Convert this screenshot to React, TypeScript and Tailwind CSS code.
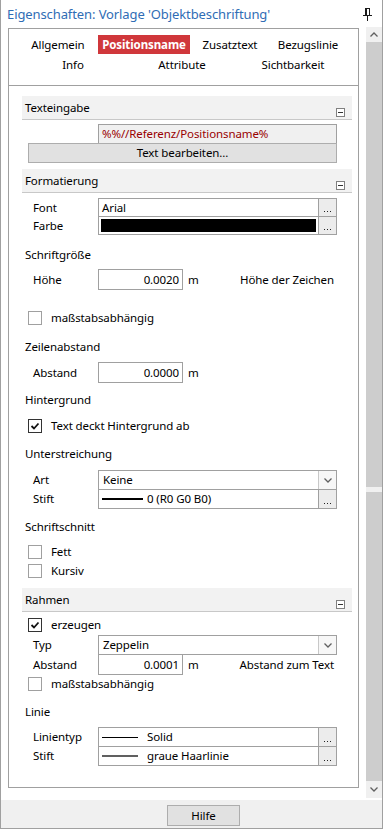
import React from "react";

function Chevron({ up }: { up?: boolean }) {
  return (
    <svg width="8" height="5" viewBox="0 0 8 5">
      <path
        d={up ? "M0.5 4.5L4 1L7.5 4.5" : "M0.5 0.5L4 4L7.5 0.5"}
        fill="none"
        stroke="#606060"
        strokeWidth="1.3"
      />
    </svg>
  );
}

function Pin() {
  return (
    <svg width="9" height="13" viewBox="0 0 9 13">
      <rect x="2" y="0" width="5" height="1" fill="#1a1a1a" />
      <rect x="2" y="1" width="2" height="6" fill="#1a1a1a" />
      <rect x="6" y="1" width="1" height="6" fill="#1a1a1a" />
      <rect x="0" y="7" width="9" height="1" fill="#1a1a1a" />
      <rect x="4" y="8" width="1" height="5" fill="#1a1a1a" />
    </svg>
  );
}

function SectionHeader({ title, className = "" }: { title: string; className?: string }) {
  return (
    <div
      className={`flex h-[24px] w-[330px] shrink-0 items-start justify-between border-b border-[#c8c8c8] bg-[#f2f2f2] pl-[3px] pr-[7px] ${className}`}
    >
      <span className="mt-[4px] leading-[16px]">{title}</span>
      <span className="mt-[12px] flex h-[9px] w-[9px] items-center justify-center border border-[#808080] bg-white">
        <span className="h-px w-[5px] bg-[#333]" />
      </span>
    </div>
  );
}

function Title({ children, className = "" }: { children: React.ReactNode; className?: string }) {
  return <div className={`h-[16px] pl-[3px] leading-[16px] ${className}`}>{children}</div>;
}

function Row({
  label,
  children,
  className = "",
}: {
  label: string;
  children: React.ReactNode;
  className?: string;
}) {
  return (
    <div className={`flex shrink-0 items-center ${className}`}>
      <span className="ml-[11px] w-[65px] shrink-0 leading-[16px]">{label}</span>
      {children}
    </div>
  );
}

function Dots() {
  return (
    <div className="flex w-[18px] items-end justify-center gap-[2px] border-l border-[#a0a0a0] bg-[#ececec] pb-[4px]">
      <span className="h-px w-px bg-[#222]" />
      <span className="h-px w-px bg-[#222]" />
      <span className="h-px w-px bg-[#222]" />
    </div>
  );
}

function DotsField({ children, className = "" }: { children: React.ReactNode; className?: string }) {
  return (
    <div className={`flex w-[239px] border border-[#a0a0a0] bg-white ${className}`}>
      <div className="flex flex-1 items-center overflow-hidden pl-[3px] leading-[16px]">{children}</div>
      <Dots />
    </div>
  );
}

function Combo({ children, className = "" }: { children: React.ReactNode; className?: string }) {
  return (
    <div className={`flex h-[20px] w-[239px] border border-[#a0a0a0] bg-white ${className}`}>
      <div className="flex flex-1 items-center pl-[4px] leading-[16px]">{children}</div>
      <div className="flex w-[18px] items-center justify-center border-l border-[#c8c8c8] bg-[#f7f7f7]">
        <Chevron />
      </div>
    </div>
  );
}

function NumberInput({ value }: { value: string }) {
  return (
    <div className="flex h-[21px] w-[85px] shrink-0 items-center justify-end border border-[#a0a0a0] bg-white pr-[3px] leading-[16px]">
      {value}
    </div>
  );
}

function Check({
  label,
  checked,
  className = "",
}: {
  label: string;
  checked?: boolean;
  className?: string;
}) {
  return (
    <div className={`flex h-[14px] shrink-0 items-center ${className}`}>
      <span
        className={`ml-[6px] flex h-[14px] w-[14px] items-center justify-center border bg-white ${
          checked ? "border-[#333]" : "border-[#a0a0a0]"
        }`}
      >
        {checked && (
          <svg width="10" height="10" viewBox="0 0 10 10">
            <path d="M1.5 5L4 7.5L8.5 2.5" fill="none" stroke="#111" strokeWidth="1.8" />
          </svg>
        )}
      </span>
      <span className="ml-[9px] leading-[16px]">{label}</span>
    </div>
  );
}

export default function App() {
  return (
    <div className="flex h-[829px] w-[383px] flex-col border-x border-b border-[#a0a0a0] bg-white font-['Noto_Sans',sans-serif] text-[11.5px] tracking-[-0.1px] text-black">
      {/* title bar */}
      <div className="flex h-[27px] shrink-0 items-center pl-[6px]">
        <span className="text-[13px] leading-[18px] tracking-[-0.1px] text-[#2f6db5]">
          Eigenschaften: Vorlage 'Objektbeschriftung'
        </span>
        <span className="ml-auto mr-[10px] mt-[2px] flex">
          <Pin />
        </span>
      </div>

      <div className="flex h-[773px] shrink-0">
        {/* property panel */}
        <div className="ml-[7px] mt-px flex h-[760px] w-[351px] flex-col border border-[#a0a0a0]">
          {/* tabs */}
          <div className="flex h-[57px] shrink-0 flex-col border-b border-[#a0a0a0] pt-[6px]">
            <div className="flex h-[19px] pl-[9px]">
              <div className="flex w-[80px] items-center justify-center">Allgemein</div>
              <div className="flex w-[92px] items-center justify-center bg-[#d0373b] font-bold text-white">
                Positionsname
              </div>
              <div className="flex w-[80px] items-center justify-center">Zusatztext</div>
              <div className="flex w-[76px] items-center justify-center">Bezugslinie</div>
            </div>
            <div className="mt-px flex h-[19px] pl-[9px]">
              <div className="flex w-[110px] items-center justify-center">Info</div>
              <div className="flex w-[108px] items-center justify-center">Attribute</div>
              <div className="flex w-[114px] items-center justify-center">Sichtbarkeit</div>
            </div>
          </div>

          {/* content */}
          <div className="flex flex-col pl-[13px]">
            <SectionHeader title="Texteingabe" className="mt-[10px]" />
            <div className="ml-[76px] mt-[4px] flex h-[20px] w-[239px] items-center border border-[#a0a0a0] bg-[#f0f0f0] pl-[3px] leading-[16px] text-[#990000]">
              %%//Referenz/Positionsname%
            </div>
            <div className="-mt-px ml-[6px] flex h-[20px] w-[309px] items-center justify-center border border-[#adadad] bg-[#e1e1e1] leading-[16px]">
              Text bearbeiten...
            </div>

            <SectionHeader title="Formatierung" className="mt-[6px]" />
            <Row label="Font" className="mt-[5px]">
              <DotsField className="h-[19px]">Arial</DotsField>
            </Row>
            <Row label="Farbe" className="-mt-px">
              <DotsField className="h-[19px]">
                <div className="-ml-[1px] mr-[2px] h-[13px] flex-1 bg-black" />
              </DotsField>
            </Row>

            <Title className="mt-[12px]">Schriftgröße</Title>
            <Row label="Höhe" className="mt-[6px]">
              <NumberInput value="0.0020" />
              <span className="ml-[5px] leading-[16px]">m</span>
              <span className="ml-auto mr-[24px] leading-[16px]">Höhe der Zeichen</span>
            </Row>
            <Check label="maßstabsabhängig" className="mt-[21px]" />

            <Title className="mt-[14px]">Zeilenabstand</Title>
            <Row label="Abstand" className="mt-[7px]">
              <NumberInput value="0.0000" />
              <span className="ml-[5px] leading-[16px]">m</span>
            </Row>

            <Title className="mt-[9px]">Hintergrund</Title>
            <Check label="Text deckt Hintergrund ab" checked className="mt-[11px]" />

            <Title className="mt-[13px]">Unterstreichung</Title>
            <Row label="Art" className="mt-[8px]">
              <Combo>Keine</Combo>
            </Row>
            <Row label="Stift" className="-mt-px">
              <DotsField className="h-[20px]">
                <span className="h-[2px] w-[41px] shrink-0 bg-black" />
                <span className="ml-[4px]">0 (R0 G0 B0)</span>
              </DotsField>
            </Row>

            <Title className="mt-[10px]">Schriftschnitt</Title>
            <Check label="Fett" className="mt-[10px]" />
            <Check label="Kursiv" className="mt-[5px]" />

            <SectionHeader title="Rahmen" className="mt-[10px]" />
            <Check label="erzeugen" checked className="mt-[6px]" />
            <Row label="Typ" className="mt-[3px]">
              <Combo>Zeppelin</Combo>
            </Row>
            <Row label="Abstand" className="-mt-px">
              <NumberInput value="0.0001" />
              <span className="ml-[5px] leading-[16px]">m</span>
              <span className="ml-auto mr-[24px] leading-[16px]">Abstand zum Text</span>
            </Row>
            <Check label="maßstabsabhängig" className="mt-[2px]" />

            <Title className="mt-[13px]">Linie</Title>
            <Row label="Linientyp" className="mt-[7px]">
              <DotsField className="h-[20px]">
                <span className="h-px w-[36px] shrink-0 bg-black" />
                <span className="ml-[9px]">Solid</span>
              </DotsField>
            </Row>
            <Row label="Stift" className="-mt-px">
              <DotsField className="h-[20px]">
                <span className="h-[2px] w-[36px] shrink-0 bg-[#606060]" />
                <span className="ml-[9px]">graue Haarlinie</span>
              </DotsField>
            </Row>
          </div>
        </div>

        {/* scrollbar */}
        <div className="ml-[7px] flex h-[771px] w-[16px] flex-col bg-[#f0f0f0]">
          <div className="flex h-[15px] items-center justify-center">
            <Chevron up />
          </div>
          <div className="h-[445px] bg-[#cdcdcd]" />
          <div className="h-[5px]" />
          <div className="h-[289px] bg-[#cdcdcd]" />
          <div className="flex h-[17px] items-center justify-center">
            <Chevron />
          </div>
        </div>
      </div>

      {/* footer */}
      <div className="flex h-[28px] shrink-0 bg-[#f0f0f0]">
        <div className="ml-[166px] mt-[5px] flex h-[21px] w-[73px] items-center justify-center border border-[#adadad] bg-[#e1e1e1] leading-[16px]">
          Hilfe
        </div>
      </div>
    </div>
  );
}
